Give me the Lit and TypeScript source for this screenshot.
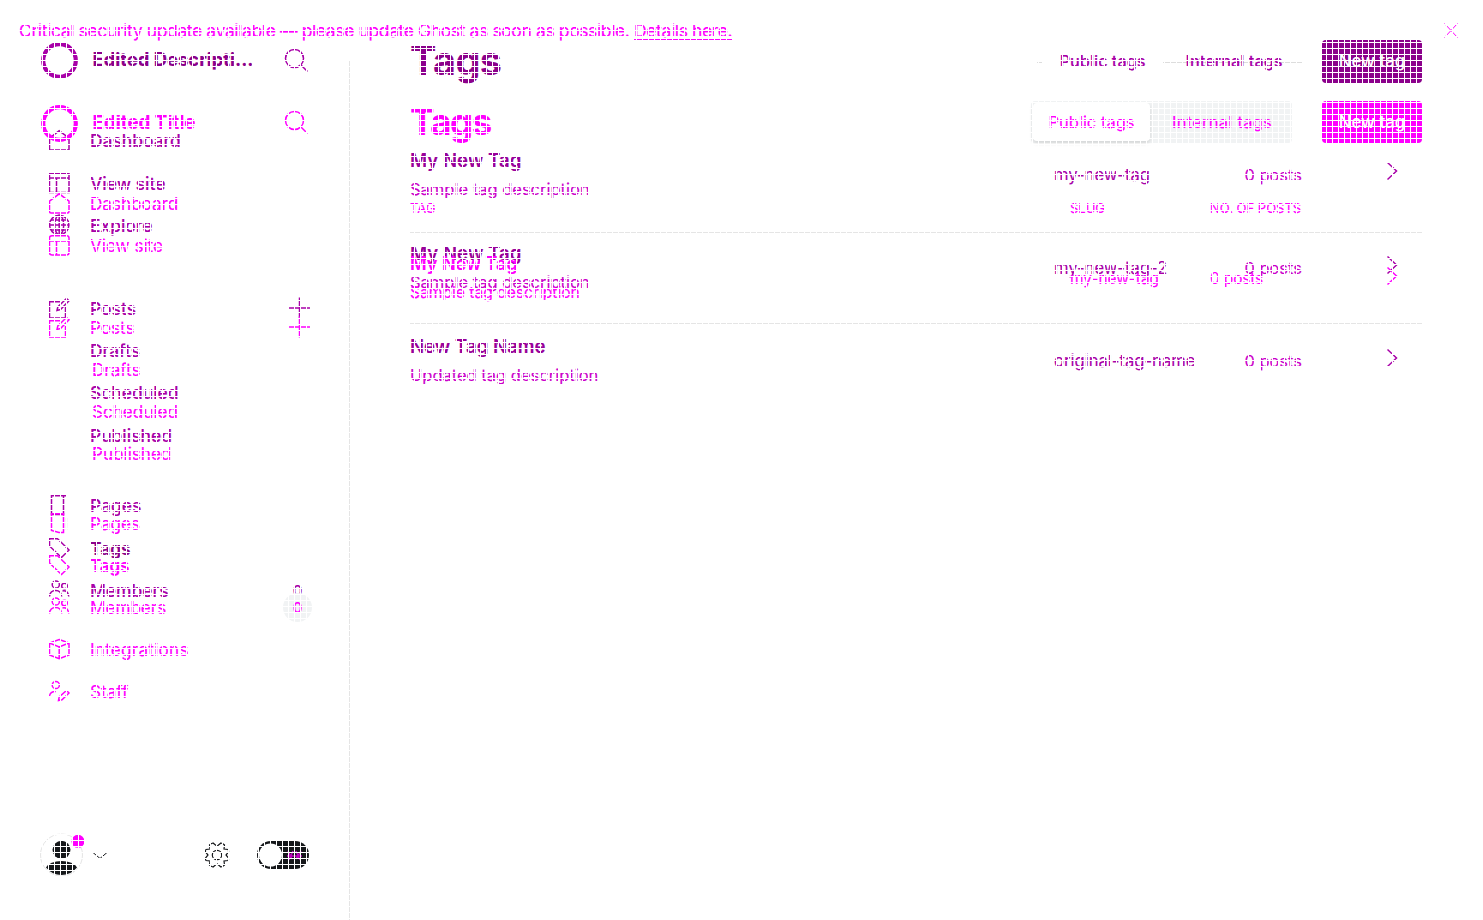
import { LitElement, html, svg, css } from "lit";
import { customElement } from "lit/decorators.js";

const icons: Record<string, unknown> = {
  home: svg`<path d="M.5 6.5V20H20V6.5H18L10.2.8 2.5 6.5Z"/>`,
  homeRound: svg`<path d="M.5 8.2V18.5Q.5 20 2 20H18.5Q20 20 20 18.5V8.2L10.2.8Z"/>`,
  site: svg`<path d="M.5.8H20V19.5H.5ZM.5 5H20M7.5 5V19.5"/>`,
  siteRound: svg`<path d="M3 .8H17.5Q20 .8 20 3V17.5Q20 20 17.5 20H3Q.5 20 .5 17.5V3Q.5 .8 3 .8ZM.5 6H20M7.5 6V20"/>`,
  globe: svg`<circle cx="10.2" cy="10" r="9.7"/><ellipse cx="10.2" cy="10" rx="4.5" ry="9.7"/><path d="M.5 10H20M2 5H18.5M2 15H18.5M10.2 0V20"/>`,
  posts: svg`<path d="M12 3.8H.5V20H16.5V9M8 12.5L8.8 9 17.5.5 20 2.8 11.5 11.5Z"/>`,
  pages: svg`<path d="M2.5.8H14.5V19.5H2.5ZM14.5 .8H17"/>`,
  pages2: svg`<path d="M2.5.8H14.5V19.5H10L2.5 17.5Z"/><path d="M17.5 5V17" stroke="#ddd"/>`,
  tag: svg`<path d="M.5.8H8.5L20 12 12.5 19.5.5 8Z"/>`,
  members: svg`<circle cx="6.8" cy="4.5" r="3.6"/><circle cx="15.5" cy="6" r="2.8"/><path d="M.5 16.5Q1 10.5 6.8 10.5 12 10.5 12.7 16.5M13.5 11Q19 10 19.8 16.5"/>`,
  cube: svg`<path d="M10.2.5L20 4V16L10.2 19.8.5 16V4ZM.5 4L10.2 8 20 4M10.2 8V19.8"/>`,
  staff: svg`<circle cx="6.8" cy="4" r="3.6"/><path d="M.5 15Q1 10.5 6.8 10.5M9.5 19.5L10.2 16 17.5 9.5 20 12 13 18.8Z"/>`,
};
const icon = (n: string) => html`<svg class="ico" width="21" height="21" viewBox="0 0 21 21">${icons[n]}</svg>`;
const plus = svg`<path d="M11.5 .5V21.5M1 11H22"/>`;

type Item = [string, string, string?];
const before: Item[][] = [
  [["home", "Dashboard"], ["site", "View site"], ["globe", "Explore"]],
  [["posts", "Posts", "plus"], ["", "Drafts"], ["", "Scheduled"], ["", "Published"]],
  [["pages", "Pages"], ["tag", "Tags", "on"], ["members", "Members", "count"]],
];
const after: Item[][] = [
  [["homeRound", "Dashboard"], ["siteRound", "View site"]],
  [["posts", "Posts", "plus"], ["", "Drafts"], ["", "Scheduled"], ["", "Published"]],
  [["pages2", "Pages"], ["tag", "Tags", "on"], ["members", "Members", "count"], ["cube", "Integrations", "wide"], ["staff", "Staff"]],
];
const rows = [
  ["My New Tag", "Sample tag description", "my-new-tag"],
  ["My New Tag", "Sample tag description", "my-new-tag-2"],
  ["New Tag Name", "Updated tag description", "original-tag-name"],
];

@customElement("app-root")
export class AppRoot extends LitElement {
  static styles = css`
    :host { display: grid; width: 1483px; height: 920px; overflow: hidden; background: #fff; font-family: Inter, sans-serif; }
    * { box-sizing: border-box; }
    .layer, .mesh { grid-area: 1 / 1; width: 1483px; height: 920px; }
    .mesh {
      z-index: 3;
      pointer-events: none;
      background: repeating-linear-gradient(90deg, #fff 0 1px, transparent 1px 6px), repeating-linear-gradient(#fff 0 1px, transparent 1px 6px);
    }
    .layer { display: grid; grid-template-columns: 350px 1fr; grid-template-rows: auto 1fr; }
    .old { color: #a800a8; -webkit-text-stroke: 0.15px; }
    .new { color: #f0f; -webkit-text-stroke: 0.2px; }
    svg { display: block; flex: none; fill: none; stroke: currentColor; stroke-width: 1.5; overflow: visible; }
    span { white-space: nowrap; }
    .banner { grid-column: 1 / 3; display: flex; align-items: center; justify-content: space-between; height: 61px; padding: 0 25px 0 19px; font-size: 17.5px; letter-spacing: -0.385px; }
    .banner u { text-underline-offset: 1.5px; text-decoration-thickness: 1px; }
    .side { display: flex; flex-direction: column; }
    .old .side { padding-top: 39px; }
    .new .side { padding-top: 41px; }
    .brand { display: flex; align-items: center; height: 42px; padding: 0 40px 0 41px; }
    .brand span { flex: 1; margin: 0 0 3px 14.6px; font-size: 18.4px; font-weight: 700; }
    .new .brand span { font-size: 18.7px; margin-bottom: 2px; }
    .new .brand svg:last-child { margin-bottom: 2px; }
    .old .brand span, .old .on span { color: #8b008b; }
    .nav { display: flex; flex-direction: column; padding: 0 38px 0 49px; font-size: 17.4px; }
    .old .nav { padding-top: 38.8px; gap: 40px; font-weight: 500; }
    .new .nav { padding-top: 38.3px; gap: 40.4px; font-size: 17.1px; }
    .group:nth-child(3) { margin-top: -12px; }
    .new .group:nth-child(3) { margin-top: -11.4px; }
    .item { display: flex; align-items: center; height: 42.4px; }
    .new .item { height: 41.9px; }
    .item span { flex: 1; margin-left: 20px; }
    .item .sub { margin-left: 41px; }
    .new .item .sub { margin-left: 43px; }
    .on { font-weight: 600; }
    .new .on { letter-spacing: -0.2px; }
    .wide { letter-spacing: 0.25px; }
    .item b { width: 29px; height: 29px; line-height: 29px; border-radius: 50%; text-align: center; font-size: 15px; font-weight: 500; }
    .new .item b { background: #f1f3f4; }
    .foot { display: flex; align-items: center; height: 44px; margin-top: auto; margin-bottom: 43px; padding: 0 41px 0 40px; color: #15171a; }
    .avatar { margin-right: 10px; }
    .gear { margin-left: auto; margin-right: 28px; }
    .line { box-shadow: inset -1px 0 #e5e5e5; }
    .main { padding: 40px 61px 0 60px; }
    .head { display: flex; align-items: center; height: 43px; }
    h1 { margin: 0 auto 0 0; font-size: 39.5px; font-weight: 700; line-height: 43px; letter-spacing: -0.5px; color: #8b008b; }
    .new h1 { color: #f0f; font-size: 36.5px; letter-spacing: -1.4px; }
    .new .head { height: 42px; }
    .tabs { display: flex; align-items: center; font-size: 16.3px; font-weight: 500; }
    .old .tabs { gap: 40px; height: 43px; margin-right: 20px; padding: 0 19.5px 2px 23px; background: linear-gradient(#ddd, #ddd) 0 22px / 5px 1px no-repeat, linear-gradient(#ddd, #ddd) right 22px / 139px 1px no-repeat; }
    .new .tabs { width: 261px; height: 42px; margin-right: 30px; padding: 2px; border-radius: 4px; background: #f1f3f4; font-size: 16.5px; font-weight: 400; }
    .new .tabs span { flex: 1; text-align: center; line-height: 38px; letter-spacing: 0.25px; padding-left: 4px; }
    .new .tabs .sel { flex: 0 0 117px; padding: 0; letter-spacing: 0; border-radius: 4px; background: #fff; box-shadow: 0 2px 4px #0002; }
    .btn { width: 100px; height: 100%; line-height: 43px; border-radius: 4px; background: #8b008b; color: #fff; font-size: 16.8px; font-weight: 500; text-align: center; -webkit-text-stroke: 0; }
    .new .btn { background: #f0f; }
    .row { display: grid; grid-template-columns: 644px 190.5px 1fr auto; align-items: center; height: 93.4px; font-size: 16.6px; }
    .list { padding-top: 41.7px; }
    .old .row > div { padding-top: 6.6px; }
    .new .row { grid-template-columns: 660px 140px 1fr auto; height: 91px; border-bottom: 1px solid #e5e5e5; font-size: 15.4px; }
    .new .cap { height: 50px; margin-top: 40px; font-size: 13px; }
    .txt { display: flex; flex-direction: column; }
    .txt span { line-height: 29px; font-size: 16.5px; }
    .new .txt span { font-size: 15.6px; }
    .txt .name { font-size: 18.6px; font-weight: 600; }
    .new .txt .name { font-size: 18px; }
    .new .count { letter-spacing: -0.1px; }
    .old .name { color: #98009a; }
    .old .desc { color: #cb00cb; }
    .old .count { font-size: 16.4px; }
    .arrow { margin-right: 25px; }
    .new .arrow { margin-bottom: 5px; }
  `;

  nav(groups: Item[][]) {
    return html`<div class="nav">${groups.map((g) => html`<div class="group">${g.map(([i, t, x]) => html`
      <div class="item ${x === "on" || x === "wide" ? x : ""}">${i ? icon(i) : ""}<span class=${i ? "" : "sub"}>${t}</span>${
        x === "plus" ? html`<svg width="24" height="22">${plus}</svg>` : x === "count" ? html`<b>0</b>` : ""}</div>`)}</div>`)}</div>`;
  }
  brand(t: string) {
    return html`<div class="brand"><svg width="37" height="37"><circle cx="18.5" cy="18.5" r="16.3" stroke-width="4.2"/></svg>
      <span>${t}</span><svg width="25" height="23"><circle cx="9.5" cy="9.5" r="9"/><path d="M16 16L22.5 22.5"/></svg></div>`;
  }
  head() {
    return html`<div class="head"><h1>Tags</h1><div class="tabs"><span class="sel">Public tags</span><span>Internal tags</span></div><span class="btn">New tag</span></div>`;
  }
  row(r: string[]) {
    return html`<div class="row"><div class="txt"><span class="name">${r[0]}</span><span class="desc">${r[1]}</span></div><div>${r[2]}</div><div class="desc count">0 posts</div>
      <svg class="arrow" width="10" height="18"><path d="M.5.5L9.5 9 .5 17.5"/></svg></div>`;
  }
  render() {
    return html`
      <div class="layer old">
        <div class="side">${this.brand("Edited Descripti...")}${this.nav(before)}</div>
        <div class="main">${this.head()}<div class="list">${rows.map((r) => this.row(r))}</div></div>
      </div>
      <div class="layer new">
        <div class="banner"><span>Critical security update available — please update Ghost as soon as possible. <u>Details here.</u></span>
          <svg width="14" height="15"><path stroke-width="1" d="M.5.5L13.5 14.5M13.5.5L.5 14.5"/></svg></div>
        <div class="side line">${this.brand("Edited Title")}${this.nav(after)}
          <div class="foot">
            <svg class="avatar" width="43" height="43" stroke="none"><circle cx="21.5" cy="21" r="21" stroke="#e5e5e5" stroke-width="1"/><g fill="#15171a" stroke="none"><circle cx="21.5" cy="15.8" r="9"/><path d="M6 33.5Q10 27 21.5 27T37 33.5Q31 41 21.5 41T6 33.5Z"/><circle cx="38" cy="7.3" r="6.5" fill="#f0f"/></g></svg>
            <svg width="14" height="7"><path stroke-width="1" d="M0 .5L7 6.5 14 .5"/></svg>
            <svg class="gear" width="24" height="26"><g stroke-width="1.2"><circle cx="12" cy="13" r="4.7"/><path d="M8 1Q6 1.5 4.5 3L5 7 1 7.5Q0 9 .5 10L3 13 .5 16Q0 17 1 18.5L5 19 4.5 23Q6 24.5 8 25L12 21.8 16 25Q18 24.5 19.5 23L19 19 23 18.5Q24 17 23.5 16L21 13 23.5 10Q24 9 23 7.5L19 7 19.5 3Q18 1.5 16 1L12 4.2Z"/></g></svg>
            <svg width="52" height="28"><g stroke="none"><rect width="52" height="28" rx="14" fill="#15171a"/><circle cx="13.5" cy="14" r="11.5" fill="#fff"/></g><path d="M31 10L35 18M36 10L32 19M39 10L43 19M44 10L39 18M30 15H45" stroke="#c000c0"/></svg>
          </div>
        </div>
        <div class="main">${this.head()}
          <div class="row cap"><span>TAG</span><span>SLUG</span><span>NO. OF POSTS</span></div>
          ${this.row(rows[0])}
        </div>
      </div>
      <div class="mesh"></div>`;
  }
}
